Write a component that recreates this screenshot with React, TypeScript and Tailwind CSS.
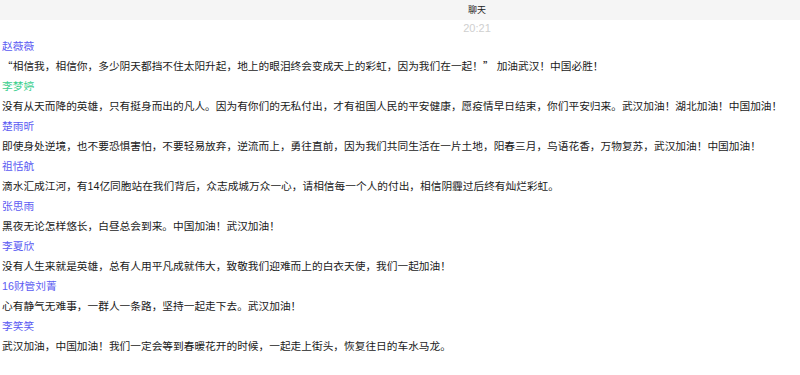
import type { ReactNode } from 'react'

const cjk = { fontFamily: '"Noto Sans CJK SC", sans-serif' }

const messages: { name: string; color: string; text: ReactNode }[] = [
  {
    name: '赵薇薇',
    color: 'text-[#5b5bf2]',
    text: (
      <>
        <span style={cjk}>“</span>相信我，相信你，多少阴天都挡不住太阳升起，地上的眼泪终会变成天上的彩虹，因为我们在一起！<span style={cjk}>”</span>
        {'\u00a0'}加油武汉！中国必胜！
      </>
    ),
  },
  { name: '李梦婷', color: 'text-[#3ccf8e]', text: '没有从天而降的英雄，只有挺身而出的凡人。因为有你们的无私付出，才有祖国人民的平安健康，愿疫情早日结束，你们平安归来。武汉加油！湖北加油！中国加油！' },
  { name: '楚雨昕', color: 'text-[#5b5bf2]', text: '即使身处逆境，也不要恐惧害怕，不要轻易放弃，逆流而上，勇往直前，因为我们共同生活在一片土地，阳春三月，鸟语花香，万物复苏，武汉加油！中国加油！' },
  { name: '祖恬航', color: 'text-[#5b5bf2]', text: '滴水汇成江河，有14亿同胞站在我们背后，众志成城万众一心，请相信每一个人的付出，相信阴霾过后终有灿烂彩虹。' },
  { name: '张思雨', color: 'text-[#5b5bf2]', text: '黑夜无论怎样悠长，白昼总会到来。中国加油！武汉加油！' },
  { name: '李夏欣', color: 'text-[#5b5bf2]', text: '没有人生来就是英雄，总有人用平凡成就伟大，致敬我们迎难而上的白衣天使，我们一起加油！' },
  { name: '16财管刘菁', color: 'text-[#5b5bf2]', text: '心有静气无难事，一群人一条路，坚持一起走下去。武汉加油！' },
  { name: '李笑笑', color: 'text-[#5b5bf2]', text: '武汉加油，中国加油！我们一定会等到春暖花开的时候，一起走上街头，恢复往日的车水马龙。' },
]

export default function App() {
  return (
    <div
      className="w-[800px] h-[375px] bg-white overflow-hidden text-[#1a1a1a]"
      style={{ fontFamily: '"Liberation Sans", "Noto Sans CJK SC", sans-serif' }}
    >
      {/* header */}
      <div className="h-[20px] bg-[#f5f5f5] flex items-center justify-center pl-[154px] text-[9px] leading-none text-[#222]">
        聊天
      </div>

      {/* time */}
      <div className="h-[16px] flex items-center justify-center pl-[154px] text-[11px] leading-none text-[#cfcfcf]">
        20:21
      </div>

      {/* messages */}
      <div className="flex flex-col">
        {messages.map((m) => (
          <div key={m.name} className="flex flex-col px-[2px]">
            <div className={`h-[20px] flex items-center text-[10.7px] leading-none ${m.color}`}>{m.name}</div>
            <div className="h-[20px] flex items-center text-[10.7px] leading-none whitespace-nowrap">
              <span>{m.text}</span>
            </div>
          </div>
        ))}
      </div>
    </div>
  )
}
